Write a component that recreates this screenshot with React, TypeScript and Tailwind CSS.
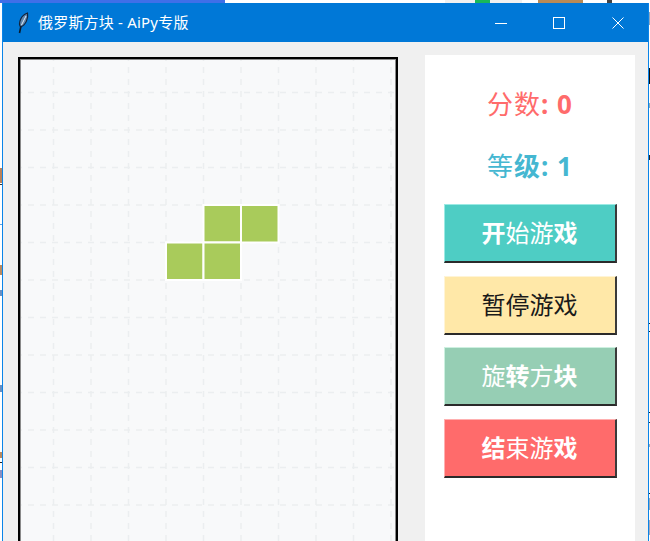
const COLS = [53.5, 91, 128.5, 166, 203.5, 241, 278.5, 316, 353.5, 391];
const ROWS = [92.5, 130, 167.5, 205, 242.5, 280, 317.5, 355, 392.5, 430, 467.5, 505, 542.5];

// board offset inside the page, the svg starts at the inner corner of the border
const BOARD_X = 20;
const BOARD_Y = 59;

const BLOCKS = [
  [203.5, 205],
  [241, 205],
  [166, 242.5],
  [203.5, 242.5],
];

// bits of the desktop that show beside the window
const LEFT_MARKS = [
  "mt-[165px] h-[15px] bg-[#b9825a]",
  "mt-[1px] h-[1px] bg-[#333333]",
  "mt-[39px] h-[1px] bg-[#5f9fe0]",
  "mt-[40px] h-[10px] bg-[#b98a60]",
  "mt-[15px] h-[6px] bg-[#6a8fc0]",
  "mt-[89px] h-[7px] bg-[#6a8fc0]",
  "mt-[60px] h-[6px] bg-[#b98a60]",
  "mt-[4px] h-[1px] bg-[#222222]",
  "mt-[7px] h-[8px] bg-[#8a8fc0]",
];

const RIGHT_MARKS = [
  "mt-[9px] h-[13px] bg-[#8fa8c0]",
  "mt-[43px] h-[16px] bg-[#111111]",
  "mt-[19px] h-[5px] bg-[#88aabb]",
  "mt-[47px] h-[5px] bg-[#222222]",
  "mt-[163px] h-[1px] bg-[#222222]",
  "mt-[7px] h-[1px] bg-[#222222]",
  "mt-[80px] h-[1px] bg-[#222222]",
  "mt-[9px] h-[1px] bg-[#333333]",
  "mt-[21px] h-[3px] bg-[#99aabb]",
  "mt-[46px] h-[1px] bg-[#222222]",
  "mt-[4px] h-[12px] bg-[#99aabb]",
  "mt-[10px] h-[15px] bg-[#aaaabb]",
];

function Glyphs({ text, bold }: { text: string; bold: number[] }) {
  return (
    <span className="whitespace-pre">
      {Array.from(text).map((ch, i) => (
        <span key={i} className={bold.includes(i) ? "font-bold" : "font-normal"}>
          {ch}
        </span>
      ))}
    </span>
  );
}

function GameButton({
  text,
  bold,
  className,
}: {
  text: string;
  bold: number[];
  className: string;
}) {
  return (
    <button
      className={`flex h-[59px] w-[173px] items-center justify-center border-t border-r-2 border-b-2 border-l border-solid border-r-[#3a3a3a] border-b-[#2a2a2a] text-[24px] leading-none ${className}`}
    >
      <Glyphs text={text} bold={bold} />
    </button>
  );
}

function Board() {
  return (
    <div className="h-[620px] w-[380px] shrink-0 overflow-hidden border-2 border-solid border-black bg-[#f8f9fa]">
      <svg width="376" height="616" className="block">
        <g stroke="#ebeef0" strokeWidth="1.5" strokeDasharray="6 6">
          {COLS.map((x) => (
            <line key={x} x1={x - BOARD_X} y1="-4" x2={x - BOARD_X} y2="616" />
          ))}
          {ROWS.map((y) => (
            <line key={y} x1="-4" y1={y - BOARD_Y} x2="376" y2={y - BOARD_Y} />
          ))}
        </g>
        {BLOCKS.map(([x, y]) => (
          <rect
            key={`${x}-${y}`}
            x={x - BOARD_X}
            y={y - BOARD_Y}
            width="37.5"
            height="37.5"
            fill="#a9cb5b"
            stroke="#ffffff"
            strokeWidth="2"
          />
        ))}
        <rect x="0.5" y="0.5" width="375" height="640" fill="none" stroke="#8a8a8a" strokeWidth="1" />
      </svg>
    </div>
  );
}

export default function App() {
  return (
    <div className="flex h-[541px] w-[650px] flex-col overflow-hidden bg-white font-['Noto_Sans','Noto_Sans_CJK_SC',sans-serif]">
      <div className="flex h-[3px] shrink-0">
        <div className="w-[225px] bg-[#3f6fe8]" />
        <div className="w-[220px] bg-white" />
        <div className="w-[30px] bg-[#f0f0f0]" />
        <div className="w-[15px] bg-[#19b85a]" />
        <div className="w-[32px] bg-[#f0f0f0]" />
        <div className="w-[16px] bg-white" />
        <div className="w-[45px] bg-[#b98a55]" />
        <div className="w-[24px] bg-white" />
        <div className="w-[5px] bg-[#444444]" />
        <div className="flex-1 bg-white" />
      </div>

      <div className="flex min-h-0 flex-1">
        <div className="flex w-[2px] shrink-0 flex-col">
          {LEFT_MARKS.map((mark) => (
            <div key={mark} className={mark} />
          ))}
        </div>

        <div className="flex min-h-0 w-[647px] shrink-0 flex-col border-x border-solid border-[#0a84e8]">
          <div className="flex h-[39px] shrink-0 items-center bg-[#0078d7] pl-[14px] text-white">
            <svg width="12" height="22" viewBox="0 0 12 22" className="shrink-0">
              <path d="M2.5 21 L4 14" stroke="#0a1a2a" strokeWidth="1.6" />
              <path
                d="M3.5 15 C1 11 4 3 10.5 1 C11.5 6 9 13 3.5 15 Z"
                fill="#5f86ad"
                stroke="#13233a"
                strokeWidth="1.2"
              />
              <path d="M4.5 13 L9 4" stroke="#dfe9f3" strokeWidth="1" />
            </svg>
            <span className="ml-[9px] text-[15px] leading-none tracking-[0.2px]">
              俄罗斯方块 - AiPy专版
            </span>
            <div className="ml-auto flex h-full items-center">
              <div className="flex w-[58px] justify-center">
                <svg width="12" height="12" viewBox="0 0 12 12">
                  <path d="M0 6.5 H12" stroke="white" strokeWidth="1" />
                </svg>
              </div>
              <div className="flex w-[58px] justify-center">
                <svg width="12" height="12" viewBox="0 0 12 12">
                  <rect x="0.5" y="0.5" width="11" height="11" fill="none" stroke="white" strokeWidth="1" />
                </svg>
              </div>
              <div className="flex w-[60px] justify-center">
                <svg width="12" height="12" viewBox="0 0 12 12">
                  <path d="M0.5 0.5 L11.5 11.5 M11.5 0.5 L0.5 11.5" stroke="white" strokeWidth="1" />
                </svg>
              </div>
            </div>
          </div>

          <div className="flex min-h-0 flex-1 items-start justify-between overflow-hidden bg-[#f0f0f0] pt-[13px] pr-[13px] pl-[15px]">
            <div className="mt-[2px]">
              <Board />
            </div>
            <div className="flex h-[600px] w-[210px] shrink-0 flex-col items-center bg-white pt-[30px]">
              <div className="flex h-[38px] items-center text-[26px] leading-none tracking-[1px] text-[#ff6b6b]">
                <Glyphs text="分数: 0" bold={[2, 4]} />
              </div>
              <div className="mt-[24px] flex h-[38px] items-center text-[26px] leading-none tracking-[1px] text-[#45b7d1]">
                <Glyphs text="等级: 1" bold={[1, 2, 4]} />
              </div>
              <div className="mt-[19px] flex flex-col gap-[12.5px]">
                <GameButton
                  text="开始游戏"
                  bold={[0, 3]}
                  className="border-t-[#9beae4] border-l-[#9beae4] bg-[#4ecdc4] text-white"
                />
                <GameButton
                  text="暂停游戏"
                  bold={[]}
                  className="border-t-[#fff4d6] border-l-[#fff4d6] bg-[#ffe8a8] text-[#1a1a1a]"
                />
                <GameButton
                  text="旋转方块"
                  bold={[1, 3]}
                  className="border-t-[#cdf0e0] border-l-[#cdf0e0] bg-[#96ceb4] text-white"
                />
                <GameButton
                  text="结束游戏"
                  bold={[0, 3]}
                  className="border-t-[#ffb0b0] border-l-[#ffb0b0] bg-[#ff6b6b] text-white"
                />
              </div>
            </div>
          </div>
        </div>

        <div className="flex w-[1px] shrink-0 flex-col">
          {RIGHT_MARKS.map((mark) => (
            <div key={mark} className={mark} />
          ))}
        </div>
      </div>
    </div>
  );
}
